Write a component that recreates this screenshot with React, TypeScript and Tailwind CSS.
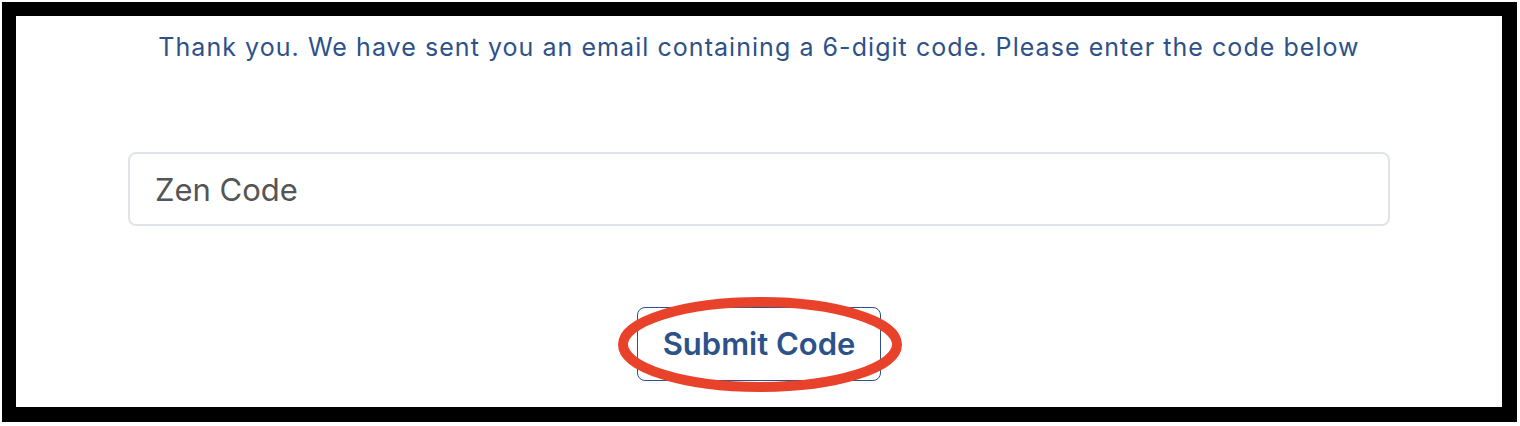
import React from 'react';

const App = () => {
  return (
    <div className="w-[1520px] h-[426px] bg-white pt-[2px] pl-[2px] font-['Inter','Liberation_Sans',sans-serif]">
      <div className="w-[1515px] h-[420px] border-t-[14px] border-l-[14px] border-r-[15px] border-b-[15px] border-black bg-white">
        <div className="flex flex-col items-center pt-[13px]">
          {/* Message */}
          <p className="text-[25px] leading-[36px] tracking-[1.05px] text-[#2d5189]">
            Thank you. We have sent you an email containing a 6-digit code. Please enter the code below
          </p>

          {/* Code field */}
          <div className="w-full px-[112px] mt-[87px]">
            <input
              type="text"
              placeholder="Zen Code"
              className="w-full h-[74px] rounded-lg border-2 border-[#e0e3e7] bg-white pl-[25px] text-[31px] text-[#555] placeholder:text-[#555] outline-none"
            />
          </div>

          {/* Submit with annotation */}
          <div className="relative mt-[81px]">
            <button className="w-[244px] h-[74px] rounded-lg border-[1.5px] border-[#2d5189] bg-white text-[31px] font-semibold text-[#2d5189]">
              Submit Code
            </button>
            <svg
              className="absolute left-[-19px] top-[-10px] pointer-events-none"
              width="284"
              height="95"
              viewBox="0 0 284 95"
            >
              <ellipse cx="142" cy="47.5" rx="137" ry="42.5" fill="none" stroke="#e8422a" strokeWidth="10" />
            </svg>
          </div>
        </div>
      </div>
    </div>
  );
};

export default App;
